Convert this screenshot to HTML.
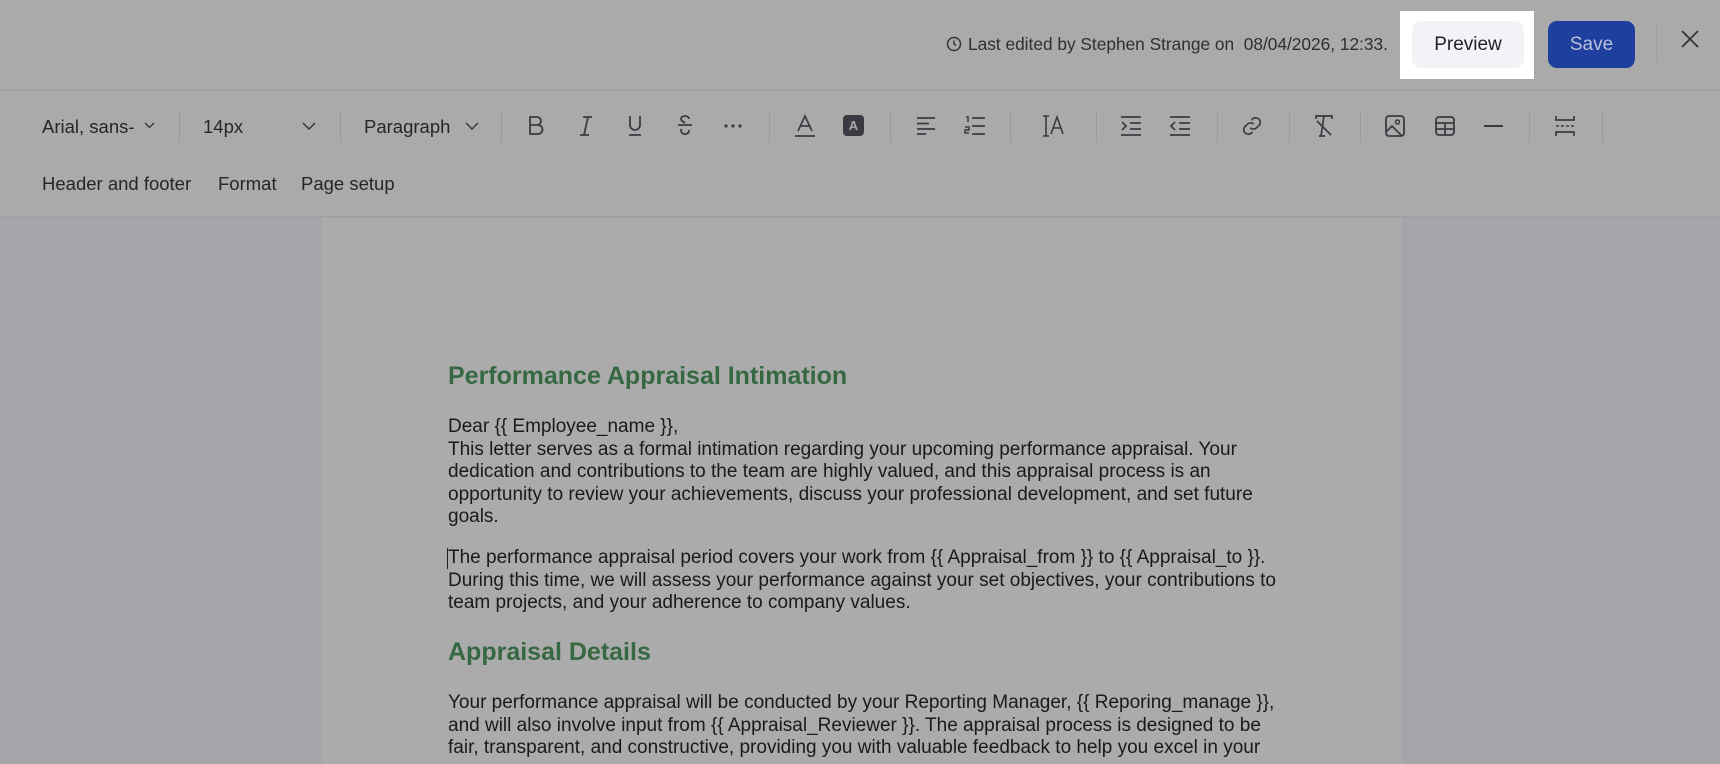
<!DOCTYPE html>
<html><head><meta charset="utf-8"><style>
*{margin:0;padding:0;box-sizing:border-box}
body{width:1720px;height:764px;overflow:hidden;background:#a4a5a9;font-family:"Liberation Sans",Arial,sans-serif;position:relative;color:#2a2b30}
.hdr{position:absolute;left:0;top:0;width:1720px;height:217px;background:#aaaaaa;border-bottom:1px solid #9e9fa2}
.hline{position:absolute;left:0;top:90px;width:1720px;height:1px;background:#9d9ea1}
.abs{position:absolute}
.t{position:absolute;font-size:18.5px;color:#25262b;white-space:nowrap;line-height:20px}
.sep{position:absolute;top:111px;width:1px;height:32px;background:#9a9b9e}
svg.i{position:absolute;overflow:visible}
.page{position:absolute;left:322px;top:218px;width:1080px;height:546px;background:#ababab}
.doc{position:absolute;left:448px;font-size:19px;line-height:22.5px;color:#1a1a1a;white-space:nowrap;font-family:"Liberation Sans",Arial,sans-serif}
.h{position:absolute;left:448px;font-weight:bold;color:#366842;font-size:25px;white-space:nowrap}
</style></head><body>
<div class="hdr"></div>
<div class="hline"></div>
<div class="page"></div>

<svg class="i" style="left:946px;top:36px" width="16" height="16" viewBox="0 0 16 16"><circle cx="8" cy="8" r="6.5" fill="none" stroke="#33343a" stroke-width="1.5"/><path d="M8 4.5V8l2 1.5" fill="none" stroke="#33343a" stroke-width="1.5"/></svg>
<div class="t" style="left:968px;top:34px;font-size:17.3px;color:#2e2f34">Last edited by Stephen Strange on&nbsp; 08/04/2026, 12:33.</div>
<div class="abs" style="left:1400px;top:11px;width:134px;height:68px;background:#ffffff"></div>
<div class="abs" style="left:1412px;top:21px;width:112px;height:47px;background:#f2f3f7;border-radius:9px;font-size:19px;color:#1f2025;text-align:center;line-height:47px">Preview</div>
<div class="abs" style="left:1548px;top:21px;width:87px;height:47px;background:#1e3f9e;border-radius:9px;font-size:19px;color:#b9c1d8;text-align:center;line-height:47px">Save</div>
<div class="abs" style="left:1656px;top:25px;width:1px;height:36px;background:#9d9ea1"></div>
<svg class="i" style="left:1681px;top:30px" width="18" height="18" viewBox="0 0 18 18"><path d="M1 1L17 17M17 1L1 17" stroke="#33343a" stroke-width="1.8"/></svg>

<div class="t" style="left:42px;top:117px">Arial, sans-</div>
<svg class="i" style="left:144px;top:122px" width="11" height="7" viewBox="0 0 11 7"><path d="M1 1l4.5 4.5L10 1" fill="none" stroke="#33343a" stroke-width="1.3"/></svg>
<div class="sep" style="left:179px"></div>
<div class="t" style="left:203px;top:117px">14px</div>
<svg class="i" style="left:302px;top:122px" width="14" height="8" viewBox="0 0 14 8"><path d="M1 1l6 6 6-6" fill="none" stroke="#33343a" stroke-width="1.4"/></svg>
<div class="sep" style="left:340px"></div>
<div class="t" style="left:364px;top:117px">Paragraph</div>
<svg class="i" style="left:465px;top:122px" width="14" height="8" viewBox="0 0 14 8"><path d="M1 1l6 6 6-6" fill="none" stroke="#33343a" stroke-width="1.4"/></svg>
<div class="sep" style="left:501px"></div>

<svg class="i" style="left:528px;top:116px" width="16" height="20" viewBox="0 0 16 20"><path d="M2 1h7a4 4 0 0 1 0 8H2zM2 9h8a4.5 4.5 0 0 1 0 9H2z" fill="none" stroke="#3a3b42" stroke-width="1.8"/></svg>
<svg class="i" style="left:578px;top:116px" width="16" height="20" viewBox="0 0 16 20"><path d="M5 1h9M2 19h9M10 1L6 19" fill="none" stroke="#3a3b42" stroke-width="1.8"/></svg>
<svg class="i" style="left:627px;top:115px" width="16" height="22" viewBox="0 0 16 22"><path d="M3 1v9a5 5 0 0 0 10 0V1M2 20h12" fill="none" stroke="#3a3b42" stroke-width="1.8"/></svg>
<svg class="i" style="left:677px;top:115px" width="16" height="22" viewBox="0 0 16 22"><path d="M12 4a4 3 0 0 0-8 0c0 2 3 3 4 4M1 10h14M4.5 14a4 3.5 0 1 0 7.5 1" fill="none" stroke="#3a3b42" stroke-width="1.8"/></svg>
<svg class="i" style="left:724px;top:124px" width="18" height="4" viewBox="0 0 18 4"><circle cx="2" cy="2" r="1.6" fill="#3a3b42"/><circle cx="9" cy="2" r="1.6" fill="#3a3b42"/><circle cx="16" cy="2" r="1.6" fill="#3a3b42"/></svg>
<div class="sep" style="left:769px"></div>
<svg class="i" style="left:794px;top:114px" width="22" height="24" viewBox="0 0 22 24"><path d="M4 17L11 2l7 15M6.5 12h9M1 22h20" fill="none" stroke="#3a3b42" stroke-width="1.7"/></svg>
<div class="abs" style="left:843px;top:115px;width:21px;height:21px;background:#3a3b42;border-radius:4px;color:#aaa;font-size:13px;text-align:center;line-height:21px;font-weight:bold">A</div>
<div class="sep" style="left:890px"></div>
<svg class="i" style="left:916px;top:117px" width="20" height="18" viewBox="0 0 20 18"><path d="M1 1h18M1 6.5h12M1 12h18M1 17h9" fill="none" stroke="#3a3b42" stroke-width="1.7"/></svg>
<svg class="i" style="left:964px;top:116px" width="22" height="20" viewBox="0 0 22 20"><path d="M8 2h13M8 10h13M8 18h13" stroke="#3a3b42" stroke-width="1.7"/><path d="M2 1h2v5M1 11h4v3H1v3h4" fill="none" stroke="#3a3b42" stroke-width="1.5"/></svg>
<div class="sep" style="left:1010px"></div>
<svg class="i" style="left:1042px;top:115px" width="24" height="22" viewBox="0 0 24 22"><path d="M1 1h6M4 1v20M1 21h6M9 19L15 2l6 17M11 13h8" fill="none" stroke="#3a3b42" stroke-width="1.6"/></svg>
<div class="sep" style="left:1096px"></div>
<svg class="i" style="left:1120px;top:116px" width="22" height="20" viewBox="0 0 22 20"><path d="M1 1h20M10 7h11M10 13h11M1 19h20M2 6l4 4-4 4" fill="none" stroke="#3a3b42" stroke-width="1.7"/></svg>
<svg class="i" style="left:1169px;top:116px" width="22" height="20" viewBox="0 0 22 20"><path d="M1 1h20M10 7h11M10 13h11M1 19h20M6 6l-4 4 4 4" fill="none" stroke="#3a3b42" stroke-width="1.7"/></svg>
<div class="sep" style="left:1217px"></div>
<svg class="i" style="left:1241px;top:115px" width="22" height="22" viewBox="0 0 24 24"><path d="M10 14a5 5 0 0 0 7 0l3-3a5 5 0 0 0-7-7l-1.5 1.5M14 10a5 5 0 0 0-7 0l-3 3a5 5 0 0 0 7 7l1.5-1.5" fill="none" stroke="#3a3b42" stroke-width="1.8"/></svg>
<div class="sep" style="left:1289px"></div>
<svg class="i" style="left:1314px;top:115px" width="20" height="22" viewBox="0 0 20 22"><path d="M2 4V1h16v3M10 1L7 21M5 21h6M3 6l14 14" fill="none" stroke="#3a3b42" stroke-width="1.7"/></svg>
<div class="sep" style="left:1360px"></div>
<svg class="i" style="left:1385px;top:115px" width="20" height="22" viewBox="0 0 20 22"><rect x="1" y="1" width="18" height="20" rx="3" fill="none" stroke="#3a3b42" stroke-width="1.8"/><circle cx="12.5" cy="7" r="2" fill="none" stroke="#3a3b42" stroke-width="1.5"/><path d="M1 17l6-6 10 10" fill="none" stroke="#3a3b42" stroke-width="1.7"/></svg>
<svg class="i" style="left:1435px;top:116px" width="20" height="20" viewBox="0 0 20 20"><rect x="1" y="1" width="18" height="18" rx="3" fill="none" stroke="#3a3b42" stroke-width="1.8"/><path d="M1 7h18M1 13h18M10 7v12" stroke="#3a3b42" stroke-width="1.7"/></svg>
<div class="abs" style="left:1484px;top:125px;width:19px;height:2px;background:#3a3b42"></div>
<div class="sep" style="left:1529px"></div>
<svg class="i" style="left:1555px;top:115px" width="20" height="22" viewBox="0 0 20 22"><path d="M1 1v4h18V1M1 21v-4h18v4" fill="none" stroke="#3a3b42" stroke-width="1.7"/><path d="M1 11h3M6 11h3M11 11h3M16 11h3" stroke="#3a3b42" stroke-width="1.5"/></svg>
<div class="sep" style="left:1602px"></div>

<div class="t" style="left:42px;top:174px">Header and footer</div>
<div class="t" style="left:218px;top:174px">Format</div>
<div class="t" style="left:301px;top:174px">Page setup</div>

<div class="h" style="top:362px">Performance Appraisal Intimation</div>
<div class="doc" style="top:416px">Dear {{ Employee_name }},<br>This letter serves as a formal intimation regarding your upcoming performance appraisal. Your<br>dedication and contributions to the team are highly valued, and this appraisal process is an<br>opportunity to review your achievements, discuss your professional development, and set future<br>goals.</div>
<div class="abs" style="left:447px;top:548px;width:1px;height:21px;background:#222"></div>
<div class="doc" style="top:547px">The performance appraisal period covers your work from {{ Appraisal_from }} to {{ Appraisal_to }}.<br>During this time, we will assess your performance against your set objectives, your contributions to<br>team projects, and your adherence to company values.</div>
<div class="h" style="top:638px">Appraisal Details</div>
<div class="doc" style="top:692px">Your performance appraisal will be conducted by your Reporting Manager, {{ Reporing_manage }},<br>and will also involve input from {{ Appraisal_Reviewer }}. The appraisal process is designed to be<br>fair, transparent, and constructive, providing you with valuable feedback to help you excel in your</div>
</body></html>
